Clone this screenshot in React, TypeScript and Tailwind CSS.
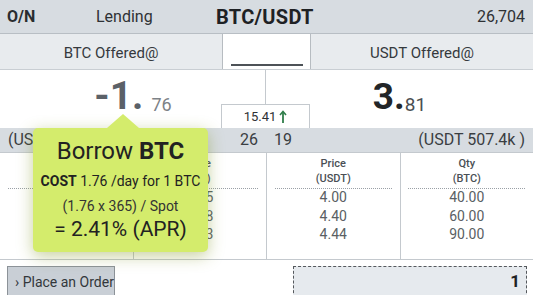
import React from "react";

const font = { fontFamily: "Roboto, 'Liberation Sans', sans-serif" };

function Col({ h1, h2, vals, last }: { h1: string; h2: string; vals: string[]; last?: boolean }) {
  return (
    <div className={`flex-1 flex flex-col items-center pt-[3px] ${last ? "" : "border-r border-[#c4c9ce]"}`}>
      <div className="text-[11px] leading-[15px] font-medium text-[#4a4f55]">{h1}</div>
      <div className="text-[11px] leading-[15px] font-medium text-[#4a4f55]">{h2}</div>
      <div className="w-[88%] border-t border-dotted border-[#9aa0a6] mt-[2px]" />
      <div className="flex flex-col items-center text-[14px] leading-[18.5px] text-[#5a5f64] mt-[-1px]">
        {vals.map((v) => (
          <div key={v}>{v}</div>
        ))}
      </div>
    </div>
  );
}

export default function App() {
  return (
    <div style={font} className="relative w-[533px] h-[295px] overflow-hidden bg-white text-[#2b2e31]">
      {/* Header */}
      <div className="h-[34px] flex items-center bg-[#d7dce1] border-b border-[#b8bec4]">
        <div className="w-[96px] pl-[7px] text-[16px] font-bold text-[#2a2d30]">O/N</div>
        <div className="w-[120px] text-[16px] text-[#2e3134]">Lending</div>
        <div className="text-[20px] font-bold text-[#1e2124] tracking-[0.3px]">BTC/USDT</div>
        <div className="flex-1" />
        <div className="pr-[8px] text-[16px] text-[#2e3134]">26,704</div>
      </div>
      {/* Offered row */}
      <div className="h-[36px] flex border-b border-[#c9ced3]">
        <div className="w-[222px] bg-[#e8ebee] flex items-center justify-center pt-[3px] text-[15px] text-[#35393d]">
          BTC Offered@
        </div>
        <div className="w-[89px] bg-white border-l border-r border-[#b7bcc1] flex items-end justify-center pb-[3px]">
          <div className="w-[72px] h-[2px] bg-[#4d5257]" />
        </div>
        <div className="flex-1 bg-[#e8ebee] flex items-center justify-center pt-[3px] text-[15px] text-[#35393d]">
          USDT Offered@
        </div>
      </div>
      {/* Big numbers row */}
      <div className="relative h-[58px] flex">
        <div className="w-[266px] flex items-end justify-center pb-[13px]">
          <span className="text-[39px] leading-[38px] font-bold text-[#5b6168]">-1.</span>
          <span className="text-[18px] leading-[20px] text-[#7d8287] ml-[8px]">76</span>
        </div>
        <div className="flex-1 flex items-end justify-center pb-[13px]">
          <span className="text-[37px] leading-[36px] font-bold text-[#222528]">3.</span>
          <span className="text-[19px] leading-[20px] text-[#4a4e52]">81</span>
        </div>
        <div className="absolute left-[221px] top-0 bottom-0 w-[89px] flex flex-col items-center">
          <div className="flex-1 w-px bg-[#c4c9ce]" />
          <div className="w-[89px] h-[24px] bg-white border border-[#c4c9ce] border-b-0 flex items-center justify-center text-[13px] text-[#2e3134]">
            15.41
            <svg width="8" height="14" viewBox="0 0 8 14" className="ml-[3px]">
              <path d="M4 13V2" stroke="#2f7d4a" strokeWidth="1.8" fill="none" />
              <path d="M1 5L4 1.5L7 5" stroke="#2f7d4a" strokeWidth="1.6" fill="none" />
            </svg>
          </div>
        </div>
      </div>
      {/* Depth bar */}
      <div className="h-[25px] flex bg-[#d7dce1] text-[16px] text-[#3a3e42] border-b border-[#c4c9ce]">
        <div className="w-[266px] flex items-center justify-between px-[8px]">
          <span>(USDT 412.9k )</span>
          <span>26</span>
        </div>
        <div className="flex-1 flex items-center justify-between px-[8px]">
          <span>19</span>
          <span>(USDT 507.4k )</span>
        </div>
      </div>
      {/* Table */}
      <div className="h-[107px] flex border-b border-[#c4c9ce]">
        <Col h1="Qty" h2="(BTC)" vals={["80.00", "50.00", "20.00"]} />
        <Col h1="Rate" h2="(/hr)" vals={["1.75", "1.68", "1.63"]} />
        <Col h1="Price" h2="(USDT)" vals={["4.00", "4.40", "4.44"]} />
        <Col h1="Qty" h2="(BTC)" vals={["40.00", "60.00", "90.00"]} last />
      </div>
      {/* Bottom */}
      <div className="flex pt-[6px] px-[7px] justify-between">
        <div className="w-[108px] h-[32px] bg-[#c9cfd6] border border-[#8c9298] flex items-center pl-[7px] text-[14px] text-[#33373b]">
          › Place an Order
        </div>
        <div className="w-[234px] h-[32px] bg-[#e6eaee] border border-dashed border-[#55595d] flex items-center justify-end pr-[6px] text-[17px] font-bold text-[#1e2124] mr-[-1px]">
          1
        </div>
      </div>
      {/* Tooltip */}
      <div className="absolute left-[33px] top-[128px] w-[175px] h-[124px] bg-[#d4ec6c] rounded-[5px] shadow-[0_4px_16px_rgba(130,150,40,0.45)] flex flex-col items-center text-[#222]">
        <div className="absolute left-[74px] top-[-14px] w-0 h-0 border-l-[16px] border-r-[16px] border-b-[14px] border-l-transparent border-r-transparent border-b-[#d4ec6c]" />
        <div className="text-[24px] leading-[28px] mt-[9px]">
          Borrow <span className="font-bold">BTC</span>
        </div>
        <div className="text-[14px] leading-[18px] mt-[7px]">
          <span className="font-bold">COST</span> 1.76 /day for 1 BTC
        </div>
        <div className="text-[14px] leading-[18px] mt-[7px] text-[#333]">(1.76 x 365) / Spot</div>
        <div className="text-[21px] leading-[24px] mt-[2px]">= 2.41% (APR)</div>
      </div>
    </div>
  );
}
